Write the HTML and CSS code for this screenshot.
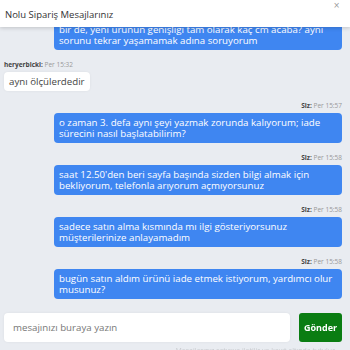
FILE: index.html
```html
<!DOCTYPE html>
<html lang="tr">
<head>
<meta charset="utf-8">
<title>Nolu Sipariş Mesajlarınız</title>
<link rel="stylesheet" href="styles.css">
</head>
<body>
<div class="modal">
  <header class="modal-header">
    <h1 class="modal-title">Nolu Sipariş Mesajlarınız</h1>
    <button class="close" type="button" aria-label="Kapat">×</button>
  </header>
  <div class="messages">
    <div class="thread">
      <div class="msg sent">
        <div class="meta"><b>Siz:</b> Per 15:10</div>
        <div class="bubble">merhaba, siparişim bugün elime ulaştı fakat ürün beklediğimden daha geniş geldi</div>
      </div>
      <div class="msg received">
        <div class="meta"><b>heryerbicki:</b> Per 15:14</div>
        <div class="bubble">merhaba, ürün ölçüleri ilan sayfasında yazmaktadır</div>
      </div>
      <div class="msg sent">
        <div class="meta"><b>Siz:</b> Per 15:16</div>
        <div class="bubble">ilandaki ölçülere baktım ama gelen ürün farklı görünüyor</div>
      </div>
      <div class="msg received">
        <div class="meta"><b>heryerbicki:</b> Per 15:20</div>
        <div class="bubble">değişim talebi oluşturabilirsiniz</div>
      </div>
      <div class="msg sent">
        <div class="meta"><b>Siz:</b> Per 15:22</div>
        <div class="bubble">tamam, değişim talebi oluşturacağım</div>
      </div>
      <div class="msg sent">
        <div class="meta"><b>Siz:</b> Per 15:24</div>
        <div class="bubble">bir de, yeni ürünün genişliği tam olarak kaç cm acaba? aynı sorunu tekrar yaşamamak adına soruyorum</div>
      </div>
      <div class="msg received">
        <div class="meta"><b>heryerbicki:</b> Per 15:32</div>
        <div class="bubble">aynı ölçülerdedir</div>
      </div>
      <div class="msg sent">
        <div class="meta"><b>Siz:</b> Per 15:57</div>
        <div class="bubble">o zaman 3. defa aynı şeyi yazmak zorunda kalıyorum; iade sürecini nasıl başlatabilirim?</div>
      </div>
      <div class="msg sent">
        <div class="meta"><b>Siz:</b> Per 15:58</div>
        <div class="bubble">saat 12.50'den beri sayfa başında sizden bilgi almak için bekliyorum, telefonla arıyorum açmıyorsunuz</div>
      </div>
      <div class="msg sent">
        <div class="meta"><b>Siz:</b> Per 15:58</div>
        <div class="bubble">sadece satın alma kısmında mı ilgi gösteriyorsunuz müşterilerinize anlayamadım</div>
      </div>
      <div class="msg sent">
        <div class="meta"><b>Siz:</b> Per 15:58</div>
        <div class="bubble">bugün satın aldım ürünü iade etmek istiyorum, yardımcı olur musunuz?</div>
      </div>
    </div>
  </div>
  <form class="composer" onsubmit="return false">
    <input class="composer-input" type="text" placeholder="mesajınızı buraya yazın" autofocus>
    <button class="send" type="submit">Gönder</button>
  </form>
  <p class="note">Mesajlarınız satıcıya iletilir ve kayıt altında tutulur</p>
</div>
</body>
</html>
```
FILE: styles.css
```css
* { box-sizing: border-box; }
html, body {
  margin: 0;
  padding: 0;
  height: 100%;
  overflow: hidden;
}
body {
  font-family: "Open Sans", "Noto Sans", sans-serif;
  background: #e9ecf1;
  color: #333;
}
.modal {
  display: flex;
  flex-direction: column;
  height: 100%;
}
.modal-header {
  position: relative;
  z-index: 2;
  flex: 0 0 27px;
  display: flex;
  align-items: center;
  justify-content: space-between;
  padding: 0 10px 0 5px;
  background: #fff;
  box-shadow: 0 1px 4px rgba(0,0,0,0.18);
}
.modal-title {
  margin: 0;
  font-size: 9.5px;
  font-weight: 400;
  color: #333;
  padding-top: 1px;
}
.close {
  align-self: flex-start;
  margin-top: 2px;
  border: 0;
  background: none;
  padding: 0;
  font-family: "DejaVu Sans", sans-serif;
  font-size: 8px;
  line-height: 8px;
  color: #999;
}
.messages {
  flex: 0 0 280px;
  display: flex;
  flex-direction: column-reverse;
  overflow-y: scroll;
  padding: 0 8px 8px 4px;
}
.messages::-webkit-scrollbar { width: 7px; }
.messages::-webkit-scrollbar-track { background: #f4f5f7; }
.messages::-webkit-scrollbar-thumb { background: #b0b0b0; border: 2px solid #f4f5f7; }
.thread {
  display: flex;
  flex-direction: column;
}
.msg {
  display: flex;
  flex-direction: column;
  margin-top: 11px;
}
.msg.sent { align-items: flex-end; }
.msg.received { align-items: flex-start; }
.meta {
  font-size: 6.5px;
  line-height: 8px;
  color: #999;
  margin-bottom: 3px;
}
.meta b { color: #444; font-weight: 700; }
.bubble {
  font-size: 9.7px;
  line-height: 11px;
  padding: 4px 5px;
  border-radius: 4px;
}
.sent .bubble {
  margin-left: 50px;
  background: #3f86f1;
  color: #fff;
  align-self: stretch;
}
.received .bubble {
  background: #fff;
  color: #444;
  box-shadow: 0 0 3px rgba(0,0,0,0.06);
}
.composer {
  display: flex;
  gap: 9px;
  padding: 6px 8px 0 4px;
}
.composer-input {
  flex: 1;
  height: 29px;
  border: 0;
  border-radius: 4px;
  background: #fff;
  padding: 0 8px 0 9px;
  font-family: inherit;
  font-size: 9.7px;
  color: #333;
  outline: none;
  box-shadow: 0 0 3px rgba(0,0,0,0.06);
}
.composer-input::placeholder { color: #777; }
.send {
  flex: 0 0 43px;
  height: 29px;
  border: 0;
  border-radius: 3px;
  background: #0a7d12;
  color: #fff;
  font-family: inherit;
  font-size: 9px;
  font-weight: 700;
  padding: 0;
}
.note {
  margin: 4px 15px 0 0;
  text-align: right;
  font-size: 7px;
  color: #c9cbcf;
}
```
